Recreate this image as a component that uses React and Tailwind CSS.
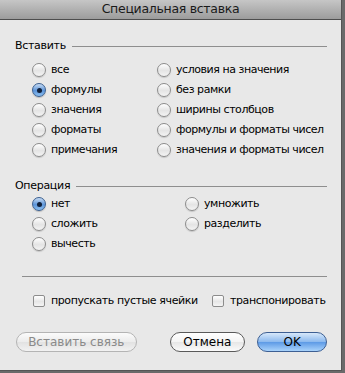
import React from "react";

const font = { fontFamily: '"Lucida Grande","DejaVu Sans",sans-serif' };

function Radio({ checked, label }) {
  return (
    <div className="flex h-[20px] items-center whitespace-nowrap">
      {checked ? (
        <span className="flex h-[14px] w-[14px] shrink-0 items-center justify-center rounded-full border border-[#3b5f8f] bg-[linear-gradient(#c8dcf4,#5d95d9_55%,#8cc0f2)] shadow-[0_1px_1px_rgba(0,0,0,0.2)]">
          <span className="h-[5px] w-[5px] rounded-full bg-[#10203a]" />
        </span>
      ) : (
        <span className="h-[14px] w-[14px] shrink-0 rounded-full border border-[#8c8c8c] bg-[linear-gradient(#ffffff,#e4e4e4_55%,#f4f4f4)] shadow-[0_1px_1px_rgba(0,0,0,0.15)]" />
      )}
      <span className="ml-[5px] text-[11px] tracking-[-0.45px] text-black">{label}</span>
    </div>
  );
}

function Checkbox({ label }) {
  return (
    <div className="flex items-center whitespace-nowrap">
      <span className="h-[12px] w-[12px] shrink-0 rounded-[2px] border border-[#8c8c8c] bg-[linear-gradient(#ffffff,#e6e6e6_55%,#f4f4f4)]" />
      <span className="ml-[6px] text-[11px] tracking-[-0.4px] text-black">{label}</span>
    </div>
  );
}

function SectionTitle({ children }) {
  return (
    <div className="flex h-[14px] items-center">
      <span className="text-[11px] tracking-[-0.3px] text-black">{children}</span>
      <span className="ml-[6px] h-px flex-1 bg-[#8e8e8e]" />
    </div>
  );
}

export default function App() {
  return (
    <div className="h-[373px] w-[345px] overflow-hidden bg-[#6a6a6a]" style={font}>
      <div className="flex h-[371px] w-[342px] flex-col border-r border-b border-[#555] bg-[#e8e8e8]">
        <div className="flex h-[20px] shrink-0 items-center justify-center border-b border-[#4d4d4d] bg-[linear-gradient(#c6c6c6,#9c9c9c)] text-[12.5px] tracking-[-0.3px] text-[#1a1a1a]">
          Специальная вставка
        </div>
        <div className="flex flex-col pl-[15px] pr-[14px]">
          <div className="mt-[19px]">
            <SectionTitle>Вставить</SectionTitle>
          </div>
          <div className="mt-[7px] flex pl-[17px]">
            <div className="flex w-[125px] flex-col">
              <Radio label="все" />
              <Radio label="формулы" checked />
              <Radio label="значения" />
              <Radio label="форматы" />
              <Radio label="примечания" />
            </div>
            <div className="flex flex-col">
              <Radio label="условия на значения" />
              <Radio label="без рамки" />
              <Radio label="ширины столбцов" />
              <Radio label="формулы и форматы чисел" />
              <Radio label="значения и форматы чисел" />
            </div>
          </div>
          <div className="mt-[19px]">
            <SectionTitle>Операция</SectionTitle>
          </div>
          <div className="mt-[1px] flex pl-[17px]">
            <div className="flex w-[153px] flex-col">
              <Radio label="нет" checked />
              <Radio label="сложить" />
              <Radio label="вычесть" />
            </div>
            <div className="flex flex-col">
              <Radio label="умножить" />
              <Radio label="разделить" />
            </div>
          </div>
          <div className="ml-[7px] mt-[22px] h-px bg-[#8e8e8e]" />
          <div className="mt-[16px] flex pl-[18px]">
            <div className="w-[179px]">
              <Checkbox label="пропускать пустые ячейки" />
            </div>
            <Checkbox label="транспонировать" />
          </div>
          <div className="mt-[22px] flex items-center">
            <button className="ml-[1px] flex h-[20px] w-[121px] items-center justify-center rounded-full border border-[#b4b4b4] bg-[linear-gradient(#fbfbfb,#ececec_50%,#e2e2e2_51%,#f2f2f2)] text-[12px] text-[#8a8a8a]">
              Вставить связь
            </button>
            <button className="ml-[33px] flex h-[20px] w-[76px] items-center justify-center rounded-full border border-[#5a5a5a] bg-[linear-gradient(#ffffff,#f4f4f4_50%,#e6e6e6_51%,#fbfbfb)] text-[12px] text-black">
              Отмена
            </button>
            <button className="ml-[12px] flex h-[20px] w-[70px] items-center justify-center rounded-full border border-[#3d5f93] bg-[linear-gradient(#d7e8fa,#8ab8ee_50%,#5d9ae6_51%,#a9d3fb)] text-[12px] text-black">
              OK
            </button>
          </div>
        </div>
      </div>
    </div>
  );
}
